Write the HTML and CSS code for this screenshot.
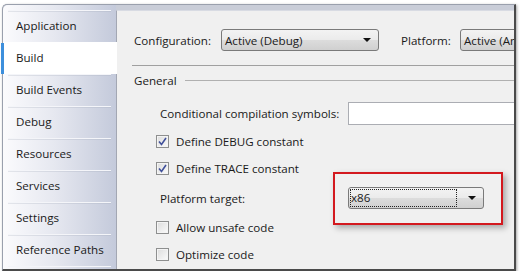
FILE: index.html
```html
<!doctype html>
<html lang="en-us">
  <head>
    <meta charset="utf-8">
    <title>Build properties</title>
    <link rel="stylesheet" href="styles.css">
  </head>
  <body>
    <div class="frame">
      <ul class="tabs">
        <li class="tab">Application</li>
        <li class="tab active">Build</li>
        <li class="tab">Build Events</li>
        <li class="tab">Debug</li>
        <li class="tab">Resources</li>
        <li class="tab">Services</li>
        <li class="tab">Settings</li>
        <li class="tab">Reference Paths</li>
      </ul>

      <div class="main">
        <div class="config-row">
          <span class="label">Configuration:</span>
          <div class="combo config-combo">
            <span class="combo-text">Active (Debug)</span>
            <span class="arrow"></span>
          </div>
          <span class="label platform-label">Platform:</span>
          <div class="combo platform-combo">
            <span class="combo-text">Active (Any CPU)</span>
          </div>
        </div>

        <div class="rule"></div>

        <div class="group-head">
          <span>General</span>
          <span class="group-line"></span>
        </div>

        <div class="field-row">
          <span class="field-label">Conditional compilation symbols:</span>
          <div class="textbox"></div>
        </div>

        <label class="check-row debug-row">
          <span class="checkbox checked">
            <svg width="9" height="9" viewBox="0 0 9 9"><path d="M1 4.5 L3.5 7.5 L8 1" fill="none" stroke="#40509a" stroke-width="1.6"/></svg>
          </span>
          Define DEBUG constant
        </label>

        <label class="check-row trace-row">
          <span class="checkbox checked">
            <svg width="9" height="9" viewBox="0 0 9 9"><path d="M1 4.5 L3.5 7.5 L8 1" fill="none" stroke="#40509a" stroke-width="1.6"/></svg>
          </span>
          Define TRACE constant
        </label>

        <div class="field-row target-row">
          <span class="field-label">Platform target:</span>
          <div class="highlight">
            <div class="combo target-combo">
              <span class="combo-text focus">x86</span>
              <span class="arrow"></span>
            </div>
          </div>
        </div>

        <label class="check-row unsafe-row">
          <span class="checkbox"></span>
          Allow unsafe code
        </label>

        <label class="check-row optimize-row">
          <span class="checkbox"></span>
          Optimize code
        </label>
      </div>
    </div>
  </body>
</html>
```

FILE: styles.css
```css
body {
  margin: 0;
  background: #ffffff;
  font-family: "Open Sans", "Noto Sans", sans-serif;
  font-size: 11.6px;
  color: #1a1a1a;
}

.frame {
  margin: 4px 0 0 2px;
  width: 511px;
  height: 264px;
  display: flex;
  background: #c9cdd8;
  border: 1px solid #9aa0ad;
  border-right: 2px solid #4a4a4a;
  border-bottom: 2px solid #4a4a4a;
  border-top-left-radius: 5px;
  box-shadow: 1px 1px 3px rgba(0, 0, 0, 0.35);
}

/* Left tab strip */
.tabs {
  list-style: none;
  margin: 0;
  padding: 5px 0 0 0;
  width: 113px;
  flex-shrink: 0;
  background: linear-gradient(to right, #fbfbfd 0%, #e6e8f0 45%, #c4cadb 100%);
  border-top-left-radius: 5px;
}

.tab {
  position: relative;
  height: 30px;
  line-height: 29px;
  padding-left: 13px;
  padding-bottom: 1px;
  border-top: 1px solid transparent;
}

.tab::before {
  content: "";
  position: absolute;
  top: -1px;
  left: 5px;
  right: 5px;
  height: 1px;
  background: #f4f5f9;
  box-shadow: 0 1px 0 rgba(160, 166, 184, 0.25);
}

.tab:last-child::after {
  content: "";
  position: absolute;
  bottom: -1px;
  left: 5px;
  right: 5px;
  height: 1px;
  background: #f4f5f9;
}

.tab.active {
  background: #ffffff;
  margin-right: -1px;
  z-index: 1;
}

.tab.active::before {
  top: 0;
  bottom: 0;
  left: -2px;
  right: auto;
  width: 3px;
  height: auto;
  background: #3d8fdc;
  box-shadow: none;
}

/* Main property page */
.main {
  flex: 1;
  margin-top: 5px;
  background: #f0f0f0;
  border-top: 1px solid #d8dbe3;
  border-left: 1px solid #a3a7b3;
  overflow: hidden;
  padding-left: 17px;
}

.config-row {
  margin-top: 18px;
  height: 22px;
  display: flex;
  align-items: center;
  white-space: nowrap;
}

.label {
  width: 87px;
  flex-shrink: 0;
}

.platform-label {
  width: 59px;
  margin-left: 22px;
}

.combo {
  position: relative;
  box-sizing: border-box;
  height: 22px;
  border: 1px solid #7a7a7a;
  border-radius: 3px;
  background: linear-gradient(to bottom, #f3f3f3 0%, #ebebeb 48%, #dcdcdc 52%, #d0d0d0 100%);
  display: flex;
  align-items: center;
  flex-shrink: 0;
}

.combo-text {
  padding-left: 3px;
}

.config-combo {
  width: 158px;
}

.platform-combo {
  width: 120px;
}

.arrow {
  position: absolute;
  right: 7px;
  top: 8px;
  border-left: 4px solid transparent;
  border-right: 4px solid transparent;
  border-top: 4px solid #111;
}

.rule {
  margin: 14px 0 0 -2px;
  height: 1px;
  background: #a0a0a0;
}

.group-head {
  margin-top: 6px;
  height: 16px;
  display: flex;
  align-items: center;
}

.group-line {
  flex: 1;
  height: 1px;
  margin-left: 8px;
  background: #b0b0b0;
}

.field-row {
  margin-top: 14px;
  height: 23px;
  display: flex;
  align-items: center;
  padding-left: 26px;
  white-space: nowrap;
}

.field-label {
  width: 188px;
  flex-shrink: 0;
}

.textbox {
  flex-shrink: 0;
  width: 200px;
  height: 23px;
  box-sizing: border-box;
  background: #ffffff;
  border: 1px solid #abadb3;
}

.check-row {
  display: flex;
  align-items: center;
  height: 16px;
  padding-left: 22px;
}

.debug-row {
  margin-top: 8px;
}

.trace-row {
  margin-top: 11px;
}

.unsafe-row {
  margin-top: 10px;
}

.optimize-row {
  margin-top: 11px;
}

.checkbox {
  box-sizing: border-box;
  width: 13px;
  height: 13px;
  margin-right: 7px;
  border: 1px solid #8e8f8f;
  background: linear-gradient(to bottom right, #dcdcdc, #fbfbfb);
  box-shadow: inset 0 0 0 1px #f4f4f4;
  display: flex;
  align-items: center;
  justify-content: center;
}

.target-row {
  margin-top: 11px;
  height: 22px;
}

.highlight {
  margin: -15px 0 -16px -15px;
  padding: 13px 17px 14px 13px;
  border: 2px solid #d3191f;
  box-shadow: 3px 3px 6px rgba(0, 0, 0, 0.3);
}

.target-combo {
  width: 136px;
}

.focus {
  margin-left: 2px;
  padding: 0 86px 0 0;
  line-height: 16px;
  outline: 1px dotted #222;
}
```
